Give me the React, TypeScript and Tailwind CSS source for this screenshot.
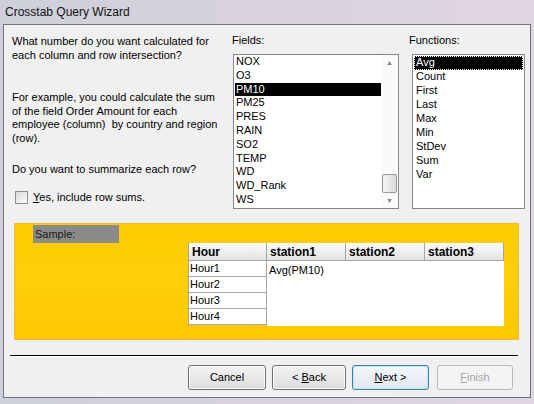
import React from 'react';

const FIELDS = ['NOX', 'O3', 'PM10', 'PM25', 'PRES', 'RAIN', 'SO2', 'TEMP', 'WD', 'WD_Rank', 'WS'];
const FUNCTIONS = ['Avg', 'Count', 'First', 'Last', 'Max', 'Min', 'StDev', 'Sum', 'Var'];
const HOURS = ['Hour1', 'Hour2', 'Hour3', 'Hour4'];
const STATIONS = ['station1', 'station2', 'station3'];

function WizardButton({
  children,
  className = '',
  variant = 'normal',
}: {
  children: React.ReactNode;
  className?: string;
  variant?: 'normal' | 'focus' | 'disabled';
}) {
  const look =
    variant === 'disabled'
      ? 'border-[#b5b9bc] bg-[#f4f4f4] text-[#a3a3a3]'
      : variant === 'focus'
        ? 'border-[#3c7fb1] bg-gradient-to-b from-[#f4f8fb] to-[#dfe7ee] shadow-[inset_0_0_0_1px_#bfe2f5] text-black'
        : 'border-[#707070] bg-gradient-to-b from-[#f3f3f3] to-[#dcdcdc] shadow-[inset_0_0_0_1px_#fbfbfb] text-black';
  return (
    <div className={`h-[25px] flex items-center justify-center rounded-[3px] border ${look} ${className}`}>
      {children}
    </div>
  );
}

export default function App() {
  return (
    <div className="w-[534px] h-[404px] flex flex-col bg-gradient-to-r from-[#cdd0da] via-[#d8d2de] to-[#e0d6e2] font-['Liberation_Sans',sans-serif] text-[11px] text-black overflow-hidden">
      <div className="h-[24px] shrink-0 pl-[5px] flex items-center text-[12px] text-[#111]">Crosstab Query Wizard</div>

      <div className="flex-1 mx-[3px] mb-[6px] border border-[#70737c] bg-[#f0f0f0] flex flex-col">
        {/* top section */}
        <div className="h-[198px] shrink-0 flex">
          <div className="w-[228px] pl-[8px] pt-[10px] leading-[13.5px]">
            <p>
              What number do you want calculated for
              <br />
              each column and row intersection?
            </p>
            <p className="mt-[29px]">
              For example, you could calculate the sum
              <br />
              of the field Order Amount for each
              <br />
              employee (column) &nbsp;by country and region
              <br />
              (row).
            </p>
            <p className="mt-[18px]">Do you want to summarize each row?</p>
            <div className="mt-[14px] ml-[3px] flex items-center gap-[5px]">
              <div className="w-[13px] h-[13px] border border-[#8f8f8f] bg-gradient-to-br from-[#dcdcdc] to-[#fafafa]" />
              <span>
                <span className="underline">Y</span>es, include row sums.
              </span>
            </div>
          </div>

          <div className="w-[177px] pt-[9px]">
            <div className="h-[13px] leading-[13px]">Fields:</div>
            <div className="mt-[7px] ml-[1px] w-[166px] h-[155px] border border-[#828790] bg-white flex">
              <div className="flex-1 pt-0 overflow-hidden pl-[1px]">
                {FIELDS.map((f) => (
                  <div
                    key={f}
                    className={`h-[13.8px] leading-[13.8px] pl-[1px] ${f === 'PM10' ? 'bg-black text-white' : ''}`}
                  >
                    {f}
                  </div>
                ))}
              </div>
              <div className="w-[17px] flex flex-col items-center bg-[#fafafa]">
                <div className="h-[17px] flex items-center justify-center text-[7px] text-[#808080]">▲</div>
                <div className="flex-1 w-full flex flex-col justify-end px-[1px] pb-[1px]">
                  <div className="h-[19px] rounded-[2px] border border-[#9a9a9a] bg-gradient-to-r from-[#f4f4f4] to-[#dadada]" />
                </div>
                <div className="h-[14px] flex items-center justify-center text-[7px] text-[#808080]">▼</div>
              </div>
            </div>
          </div>

          <div className="flex-1 pt-[9px]">
            <div className="h-[13px] leading-[13px]">Functions:</div>
            <div className="mt-[7px] ml-[3px] w-[113px] h-[155px] border border-[#828790] bg-white p-[1px]">
              {FUNCTIONS.map((f) => (
                <div
                  key={f}
                  className={`h-[14px] leading-[13px] pl-[2px] ${
                    f === 'Avg' ? 'bg-black text-white outline-1 outline-dotted outline-white -outline-offset-1' : ''
                  }`}
                >
                  {f}
                </div>
              ))}
            </div>
          </div>
        </div>

        {/* sample panel */}
        <div className="ml-[10px] w-[505px] h-[117px] border border-[#f7b733] bg-gradient-to-b from-[#ffcc00] via-[#ffcf0a] to-[#ffc800] flex flex-col">
          <div className="ml-[18px] mt-[1px] w-[86px] h-[18px] leading-[18px] bg-[#8a8a8a] text-[#1a1a1a] pl-[2px]">Sample:</div>
          <div className="ml-[173px] flex border-l border-[#a5a5a5]">
            <div className="w-[78px] flex flex-col">
              <div className="h-[18px] leading-[18px] pl-[3px] font-bold text-[12px] bg-gradient-to-b from-[#fbfbfb] to-[#e3e3e3] border-b border-r border-[#a5a5a5]">
                Hour
              </div>
              {HOURS.map((h) => (
                <div key={h} className="h-[16px] leading-[15px] bg-white border-b border-r border-[#a5a5a5] pl-[1px]">
                  {h}
                </div>
              ))}
            </div>
            <div className="flex flex-col">
              <div className="flex">
                {STATIONS.map((s) => (
                  <div
                    key={s}
                    className="w-[79px] h-[18px] leading-[18px] pl-[3px] font-bold text-[12px] bg-gradient-to-b from-[#fbfbfb] to-[#e3e3e3] border-b border-r border-[#a5a5a5]"
                  >
                    {s}
                  </div>
                ))}
              </div>
              <div className="h-[65px] bg-white pl-[2px] pt-[1px]">Avg(PM10)</div>
            </div>
          </div>
        </div>

        {/* separator */}
        <div className="ml-[6px] mt-[15px] w-[508px] h-[1px] bg-black" />
        <div className="ml-[6px] w-[508px] h-[1px] bg-white" />

        {/* buttons */}
        <div className="mt-[8px] ml-[184px] flex">
          <WizardButton className="w-[78px]">Cancel</WizardButton>
          <WizardButton className="w-[74px] ml-[6px]">
            &lt; <span className="underline ml-[3px]">B</span>ack
          </WizardButton>
          <WizardButton className="w-[77px] ml-[6px]" variant="focus">
            <span className="underline">N</span>ext &gt;
          </WizardButton>
          <WizardButton className="w-[76px] ml-[8px]" variant="disabled">
            <span className="underline">F</span>inish
          </WizardButton>
        </div>
      </div>
    </div>
  );
}
